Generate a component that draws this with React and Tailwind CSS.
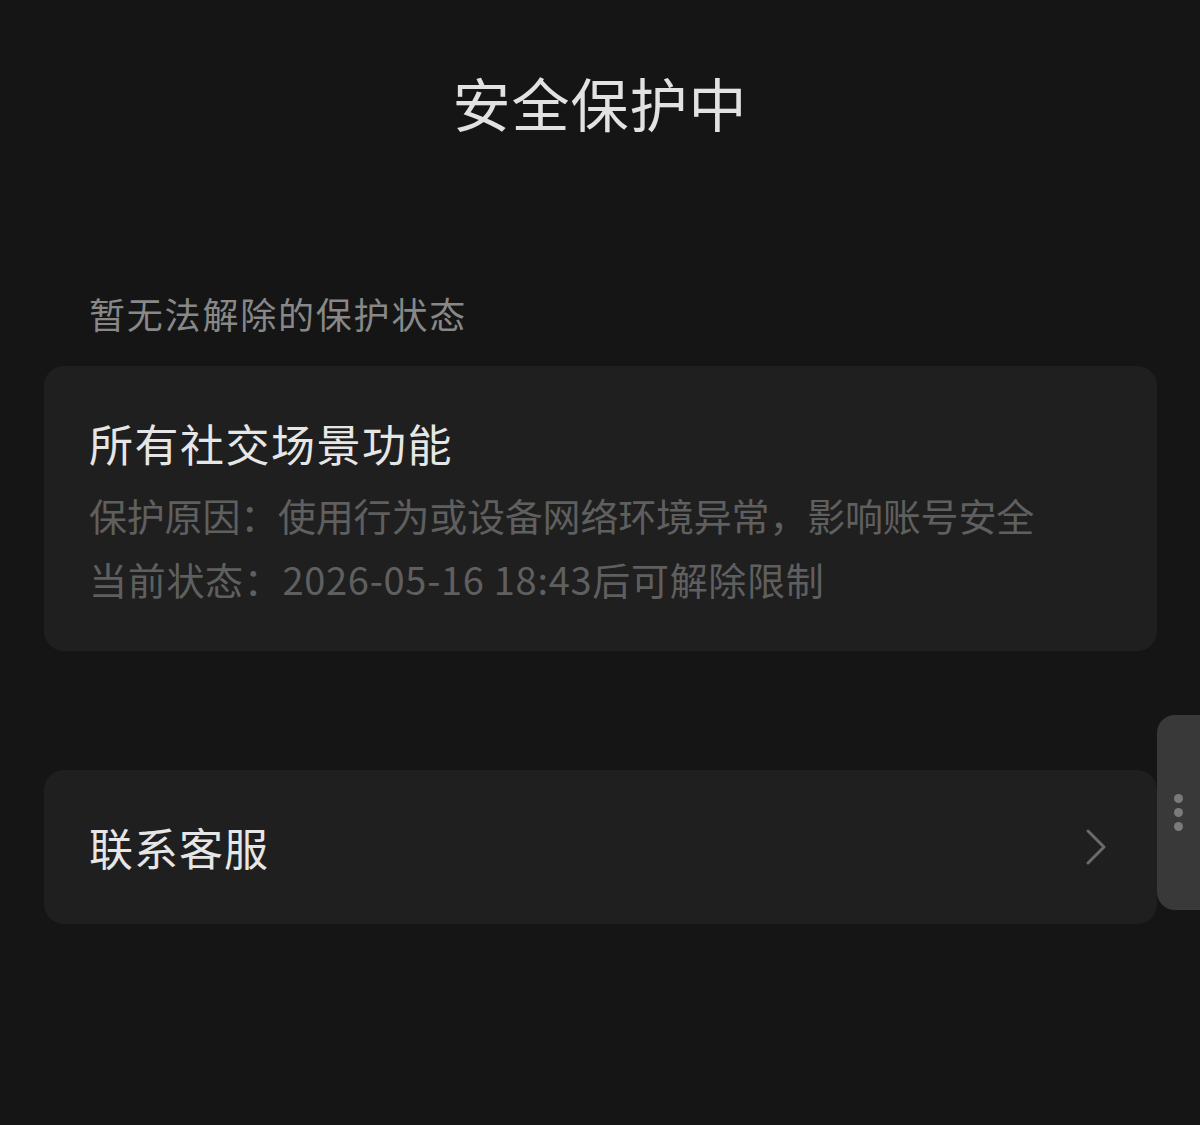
import React from 'react';

const font = { fontFamily: '"Noto Sans CJK SC", "Noto Sans", sans-serif' };

const Chevron = () => (
  <svg width="22" height="38" viewBox="0 0 22 38" fill="none" className="text-[#6b6b6b]">
    <path d="M3 3 L19 19 L3 35" stroke="currentColor" strokeWidth="3" strokeLinecap="round" strokeLinejoin="round" />
  </svg>
);

const SideTab = () => (
  <div className="absolute right-0 top-[715px] w-[43px] h-[195px] bg-[#393939] rounded-l-[18px] flex flex-col items-center justify-center gap-[5px]">
    <span className="w-[9px] h-[9px] rounded-full bg-[#7a7a7a]" />
    <span className="w-[9px] h-[9px] rounded-full bg-[#7a7a7a]" />
    <span className="w-[9px] h-[9px] rounded-full bg-[#7a7a7a]" />
  </div>
);

export default function App() {
  return (
    <div className="relative w-[1200px] h-[1125px] bg-[#151515] overflow-hidden" style={font}>
      <h1 className="pt-[69px] text-center text-[58px] leading-[67px] tracking-[1px] text-[#e2e2e2] font-normal">安全保护中</h1>

      <p className="mt-[157px] pl-[89px] text-[36px] leading-[40px] tracking-[1.8px] text-[#888888]">暂无法解除的保护状态</p>

      <div className="mt-[33px] ml-[44px] mr-[43px] h-[285px] bg-[#1f1f1f] rounded-[20px] px-[45px] pt-[51px]">
        <div className="text-[44px] leading-[52px] tracking-[1.5px] text-[#e6e6e6]">所有社交场景功能</div>
        <div className="mt-[26px] text-[38px] leading-[40px] tracking-[-0.2px] text-[#5f5f5f]">保护原因：使用行为或设备网络环境异常，影响账号安全</div>
        <div className="mt-[24px] text-[38px] leading-[40px] tracking-[0.7px] text-[#5f5f5f]">当前状态：2026-05-16 18:43后可解除限制</div>
      </div>

      <div className="mt-[119px] ml-[44px] mr-[43px] h-[154px] bg-[#1f1f1f] rounded-[20px] pl-[45px] pr-[50px] flex items-center justify-between">
        <span className="text-[44px] leading-[52px] tracking-[1px] text-[#e6e6e6]">联系客服</span>
        <Chevron />
      </div>

      <SideTab />
    </div>
  );
}
